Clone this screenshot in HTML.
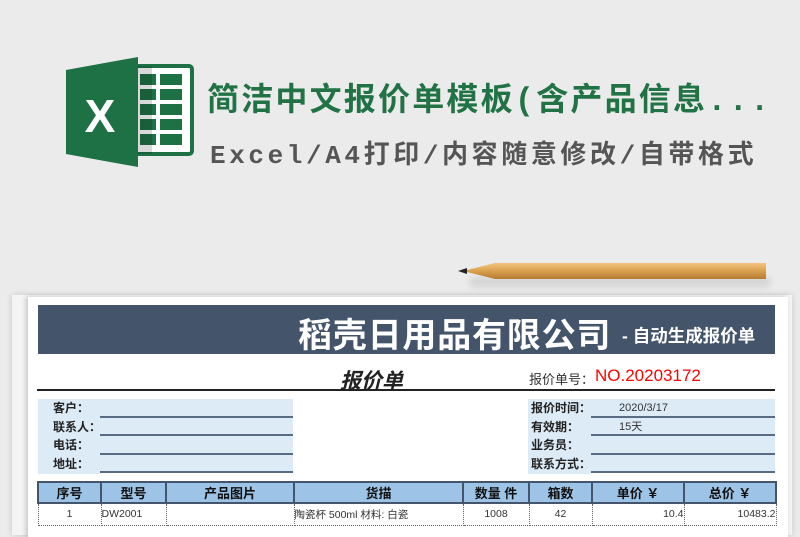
<!DOCTYPE html>
<html><head><meta charset="utf-8"><style>
*{margin:0;padding:0;box-sizing:border-box}
body{width:800px;height:526px;overflow:hidden;background:#ebebeb;position:relative;font-family:"Liberation Sans","Noto Sans CJK SC",sans-serif}
.abs{position:absolute}
.t1{left:207px;top:74px;font:bold 32px "Liberation Mono","Noto Sans CJK SC",monospace;color:#217346;letter-spacing:2.2px;white-space:nowrap}
.t2{left:210px;top:134px;font:bold 26px "Liberation Mono","Noto Sans CJK SC",monospace;color:#555;letter-spacing:3.6px;white-space:nowrap}
.lbl{font-size:12px;font-weight:bold;color:#222;line-height:18.5px;white-space:nowrap}
.inp{border-bottom:2px solid #5a6b84;background:#ddebf7;height:18.5px;font-size:11px;color:#333;padding-left:28px;line-height:18px}
table{border-collapse:collapse;position:absolute;left:37px;top:481px;width:738px;table-layout:fixed}
th{background:#9dc3e6;border:2px solid #44546a;font-size:13px;height:21px;color:#111}
td{border:1px dotted #666;font-size:10.5px;height:22px;color:#333;background:#fff}
</style></head><body>
<svg class="abs" style="left:62px;top:56px" width="134" height="112" viewBox="0 0 134 112">
<rect x="73" y="10" width="57" height="88" rx="3" fill="#fff" stroke="#1e7145" stroke-width="4"/>
<rect x="78" y="18" width="16" height="11" fill="#1e7145"/><rect x="98" y="18" width="22" height="11" fill="#1e7145"/>
<rect x="78" y="33" width="16" height="11" fill="#1e7145"/><rect x="98" y="33" width="22" height="11" fill="#1e7145"/>
<rect x="78" y="48" width="16" height="11" fill="#1e7145"/><rect x="98" y="48" width="22" height="11" fill="#1e7145"/>
<rect x="78" y="63" width="16" height="11" fill="#1e7145"/><rect x="98" y="63" width="22" height="11" fill="#1e7145"/>
<rect x="78" y="78" width="16" height="11" fill="#1e7145"/><rect x="98" y="78" width="22" height="11" fill="#1e7145"/>
<rect x="76" y="10" width="14" height="88" fill="#000" opacity="0.15"/>
<path d="M4 14 L76 1 L76 111 L4 98 Z" fill="#1e7145"/>
<text x="38" y="76" text-anchor="middle" font-family="Liberation Sans" font-weight="bold" font-size="46" fill="#fff">X</text>
</svg>
<div class="abs t1">简洁中文报价单模板(含产品信息...</div>
<div class="abs t2">Excel/A4打印/内容随意修改/自带格式</div>
<div class="abs" style="left:470px;top:278px;width:300px;height:8px;background:#000;opacity:.12;filter:blur(4px)"></div>
<svg class="abs" style="left:455px;top:260px" width="315" height="22"><defs><linearGradient id="g" x1="0" y1="0" x2="0" y2="1"><stop offset="0" stop-color="#f3c57f"/><stop offset=".5" stop-color="#d9a04e"/><stop offset="1" stop-color="#b57b32"/></linearGradient></defs>
<path d="M8 11 L40 3 L311 3 L311 19 L40 19 Z" fill="url(#g)"/><path d="M3 11 L12 8 L12 14 Z" fill="#222"/></svg>
<div class="abs" style="left:12px;top:295px;width:780px;height:240px;background:#f4f4f4;box-shadow:0 0 6px rgba(0,0,0,.15)"></div>
<div class="abs" style="left:28px;top:297px;width:760px;height:240px;background:#fff;box-shadow:-2px 0 5px rgba(0,0,0,.2)"></div>
<div class="abs" style="left:38px;top:305px;width:737px;height:49px;background:#44546a"></div>
<div class="abs" style="left:298px;top:308px;color:#fff;font-weight:bold;font-size:34px;letter-spacing:0.8px;white-space:nowrap">稻壳日用品有限公司</div>
<div class="abs" style="left:622px;top:323px;color:#fff;font-weight:bold;font-size:17.5px;white-space:nowrap">- 自动生成报价单</div>
<div class="abs" style="left:340px;top:365px;font-size:21px;font-weight:bold;font-style:italic;color:#222">报价单</div>
<div class="abs" style="left:529px;top:369px;font-size:13px;color:#333">报价单号：</div>
<div class="abs" style="left:595px;top:366px;font-size:17px;color:#f00">NO.20203172</div>
<div class="abs" style="left:37px;top:389px;width:738px;height:2px;background:#222"></div>
<div class="abs" style="left:38px;top:399px;width:62px;height:75px;background:#ddebf7;padding-left:15px">
<div class="lbl">客户：</div><div class="lbl">联系人：</div><div class="lbl">电话：</div><div class="lbl">地址：</div></div>
<div class="abs" style="left:100px;top:399px;width:193px">
<div class="inp"></div><div class="inp"></div><div class="inp"></div><div class="inp"></div></div>
<div class="abs" style="left:528px;top:399px;width:63px;height:75px;background:#ddebf7;padding-left:3px">
<div class="lbl">报价时间：</div><div class="lbl">有效期：</div><div class="lbl">业务员：</div><div class="lbl">联系方式：</div></div>
<div class="abs" style="left:591px;top:399px;width:184px">
<div class="inp">2020/3/17</div><div class="inp">15天</div><div class="inp"></div><div class="inp"></div></div>
<table><colgroup><col style="width:63px"><col style="width:65px"><col style="width:128px"><col style="width:169px"><col style="width:66px"><col style="width:63px"><col style="width:92px"><col style="width:92px"></colgroup>
<tr><th>序号</th><th>型号</th><th>产品图片</th><th>货描</th><th>数量 件</th><th>箱数</th><th>单价 ￥</th><th>总价 ￥</th></tr>
<tr><td style="text-align:center">1</td><td>DW2001</td><td></td><td>陶瓷杯 500ml 材料: 白瓷</td><td style="text-align:center">1008</td><td style="text-align:center">42</td><td style="text-align:right">10.4</td><td style="text-align:right">10483.2</td></tr>
</table>
</body></html>
